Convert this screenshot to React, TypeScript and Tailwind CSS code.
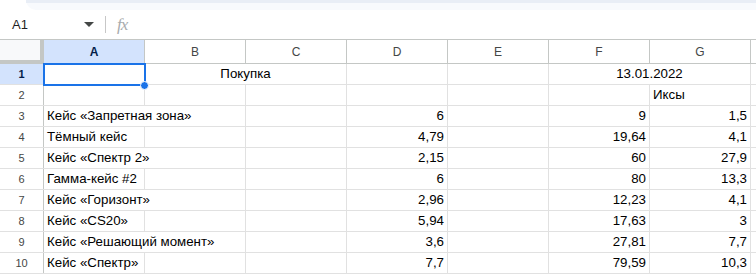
const COLS = ['A', 'B', 'C', 'D', 'E', 'F', 'G'];

type Row = {
  name?: string;
  d?: string;
  f?: string;
  g?: string;
  overflow?: boolean;
};

const ROWS: Row[] = [
  { name: 'Кейс «Запретная зона»', d: '6', f: '9', g: '1,5', overflow: true },
  { name: 'Тёмный кейс', d: '4,79', f: '19,64', g: '4,1' },
  { name: 'Кейс «Спектр 2»', d: '2,15', f: '60', g: '27,9', overflow: true },
  { name: 'Гамма-кейс #2', d: '6', f: '80', g: '13,3' },
  { name: 'Кейс «Горизонт»', d: '2,96', f: '12,23', g: '4,1', overflow: true },
  { name: 'Кейс «CS20»', d: '5,94', f: '17,63', g: '3' },
  { name: 'Кейс «Решающий момент»', d: '3,6', f: '27,81', g: '7,7', overflow: true },
  { name: 'Кейс «Спектр»', d: '7,7', f: '79,59', g: '10,3' },
];

const cell = 'w-[101px] shrink-0 h-full border-r border-[#e1e1e1] flex items-center px-[3px] whitespace-nowrap';

function RowHead({ n, active }: { n: number; active?: boolean }) {
  return (
    <div
      className={
        'w-[44px] shrink-0 h-full border-r border-[#c4c7c5] flex items-center justify-center text-[11px] ' +
        (active ? 'bg-[#d3e3fd] text-[#041e49] font-bold' : 'text-[#444746]')
      }
    >
      {n}
    </div>
  );
}

export default function App() {
  return (
    <div className="w-[756px] h-[275px] overflow-hidden bg-white font-['Liberation_Sans',Arial,sans-serif] text-[13.3px] text-black">
      {/* верхняя полоска */}
      <div className="h-[10px] flex">
        <div className="w-[26px] shrink-0" />
        <div className="flex-1 flex flex-col bg-[#f8fafd] rounded-bl-[10px]">
          <div className="h-[3px] bg-[#e9eef6]" />
        </div>
      </div>

      {/* строка формул */}
      <div className="h-[29px] flex items-center">
        <div className="w-[78px] pl-[12px] text-[13px] text-[#1f1f1f]">A1</div>
        <svg width="10" height="6" viewBox="0 0 10 6" className="ml-[6px]">
          <path d="M0 0h10L5 5z" fill="#444746" />
        </svg>
        <div className="ml-[11px] w-px h-[17px] bg-[#c7c7c7]" />
        <span className="ml-[11px] font-['Liberation_Serif',serif] italic text-[17px] text-[#a8abad] tracking-[-1px]">fx</span>
      </div>

      {/* таблица */}
      <div className="relative">
        {/* заголовки столбцов */}
        <div className="h-[25px] flex border-y border-[#c4c7c5]">
          <div className="w-[44px] shrink-0 h-full bg-[#f8f9fa] flex">
            <div className="flex-1 flex flex-col">
              <div className="flex-1" />
              <div className="h-[3px] bg-[#c4c7c5]" />
            </div>
            <div className="w-[4px] bg-[#c4c7c5]" />
          </div>
          {COLS.map((c, i) => (
            <div
              key={c}
              className={
                'w-[101px] shrink-0 h-full border-r border-[#c4c7c5] flex items-center justify-center text-[12px] ' +
                (i === 0 ? 'bg-[#d3e3fd] text-[#041e49] font-bold' : 'text-[#444746]')
              }
            >
              {c}
            </div>
          ))}
          <div className="flex-1" />
        </div>

        {/* строка 1 */}
        <div className="h-[21px] flex border-b border-[#e1e1e1]">
          <RowHead n={1} active />
          <div className={cell} />
          <div className="w-[202px] shrink-0 h-full border-r border-[#e1e1e1] flex items-center justify-center">Покупка</div>
          <div className={cell} />
          <div className={cell} />
          <div className="w-[202px] shrink-0 h-full border-r border-[#e1e1e1] flex items-center justify-center">13.01.2022</div>
          <div className="flex-1" />
        </div>

        {/* строка 2 */}
        <div className="h-[21px] flex border-b border-[#e1e1e1]">
          <RowHead n={2} />
          <div className={cell} />
          <div className={cell} />
          <div className={cell} />
          <div className={cell} />
          <div className={cell} />
          <div className={cell} />
          <div className={cell}>Иксы</div>
          <div className="flex-1" />
        </div>

        {ROWS.map((r, i) => (
          <div key={i} className="h-[21px] flex border-b border-[#e1e1e1]">
            <RowHead n={i + 3} />
            <div className={cell + (r.overflow ? ' border-r-transparent overflow-visible relative z-10' : '')}>{r.name}</div>
            <div className={cell} />
            <div className={cell} />
            <div className={cell + ' justify-end'}>{r.d}</div>
            <div className={cell} />
            <div className={cell + ' justify-end'}>{r.f}</div>
            <div className={cell + ' justify-end'}>{r.g}</div>
            <div className="flex-1" />
          </div>
        ))}

        {/* выделение A1 */}
        <div className="absolute left-[43px] top-[24px] w-[103px] h-[23px] border-2 border-[#1a73e8] pointer-events-none" />
        <div className="absolute left-[140px] top-[42px] w-[9px] h-[9px] rounded-full bg-[#1a73e8] border border-white" />
      </div>
    </div>
  );
}
